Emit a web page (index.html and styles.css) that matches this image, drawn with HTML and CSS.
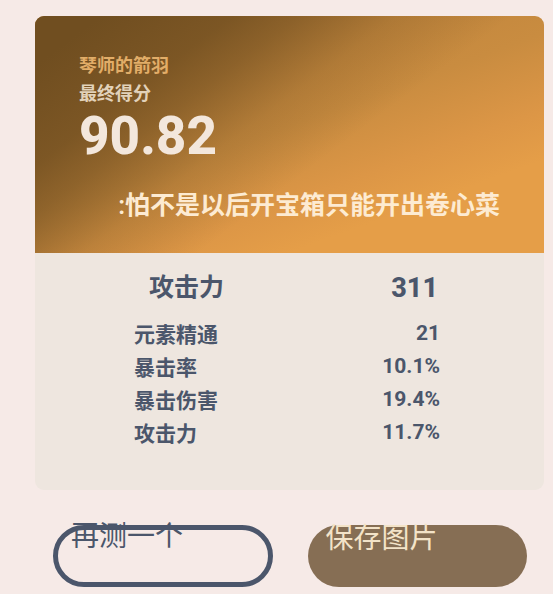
FILE: index.html
```html
<!DOCTYPE html>
<html lang="zh-CN">
<head>
    <meta charset="UTF-8">
    <meta name="viewport" content="width=device-width, initial-scale=1.0">
    <title>琴师的箭羽</title>
    <link rel="stylesheet" href="styles.css">
</head>
<body>
    <div class="card">
        <div class="card-head">
            <div class="name">琴师的箭羽</div>
            <div class="label">最终得分</div>
            <div class="score">90.82</div>
            <div class="comment">:怕不是以后开宝箱只能开出卷心菜</div>
        </div>
        <div class="card-body">
            <div class="main-stat">
                <span>攻击力</span>
                <span class="main-value">311</span>
            </div>
            <ul class="stats">
                <li><span class="stat-name">元素精通</span><span class="value">21</span></li>
                <li><span class="stat-name">暴击率</span><span class="value">10.1%</span></li>
                <li><span class="stat-name">暴击伤害</span><span class="value">19.4%</span></li>
                <li><span class="stat-name">攻击力</span><span class="value">11.7%</span></li>
            </ul>
        </div>
    </div>

    <div class="buttons">
        <button class="btn btn-outline" type="button">再测一个</button>
        <button class="btn btn-save" type="button">保存图片</button>
    </div>
</body>
</html>
```
FILE: styles.css
```css
:root {
    --page: #f6eae7;
    --panel: #eee6df;
    --ink: #4b566b;
    --brown: #866e54;
}

body {
    margin: 0;
    padding: 16px 9px 0 35px;
    background: var(--page);
    color: var(--ink);
    font-family: Roboto, "Noto Sans CJK SC", sans-serif;
}

.card {
    border-radius: 9px;
    overflow: hidden;
    background: var(--panel);
}

.card-head {
    padding: 36px 44px 29px;
    background:
        linear-gradient(143deg, #704e20 8%, rgba(112, 78, 32, 0.85) 24%, rgba(112, 78, 32, 0.65) 32%, rgba(112, 78, 32, 0.25) 44%, rgba(112, 78, 32, 0) 58%),
        linear-gradient(160deg, #b87e38 0%, #c98c40 48%, #dc9646 66%, #e59e48 78%);
    color: #f3e7dc;
    font-weight: 600;
}

.name,
.label {
    font-size: 18px;
    line-height: 28px;
}

.name {
    color: #e2ad68;
}

.label {
    color: #e2d2ba;
}

.score {
    font-size: 53px;
    line-height: 56px;
    font-weight: 800;
}

.comment {
    margin-top: 24px;
    font-size: 25px;
    line-height: 36px;
    text-align: right;
    color: #fdebd2;
}

.card-body {
    padding: 17px 104px 41px 99px;
    font-weight: 600;
}

.main-stat {
    display: flex;
    justify-content: space-between;
    padding: 0 2px 0 15px;
    margin-bottom: 11px;
    font-size: 25px;
    line-height: 36px;
}

.main-value {
    font-size: 27px;
    font-weight: 800;
}

.stats {
    list-style: none;
    margin: 0;
    padding: 0;
}

.stats li {
    display: flex;
    justify-content: space-between;
    font-size: 21px;
    line-height: 33px;
}

.stat-name {
    padding-top: 4px;
    line-height: 29px;
}

.value {
    font-weight: 700;
}

.buttons {
    display: flex;
    gap: 35px;
    padding: 35px 17px 0 18px;
}

.btn {
    flex: 1;
    display: flex;
    align-items: flex-start;
    box-sizing: border-box;
    height: 62px;
    padding: 0 18px;
    border: none;
    border-radius: 31px;
    font-family: inherit;
    font-size: 28px;
    font-weight: 400;
    white-space: nowrap;
    cursor: pointer;
}

/* the label sits across the top edge of the pill */
.btn-outline {
    padding: 0 13px;
    border: 5px solid var(--ink);
    background: transparent;
    color: var(--ink);
    line-height: 14px;
}

.btn-save {
    background: var(--brown);
    color: #f3e3c8;
    line-height: 28px;
}
```
